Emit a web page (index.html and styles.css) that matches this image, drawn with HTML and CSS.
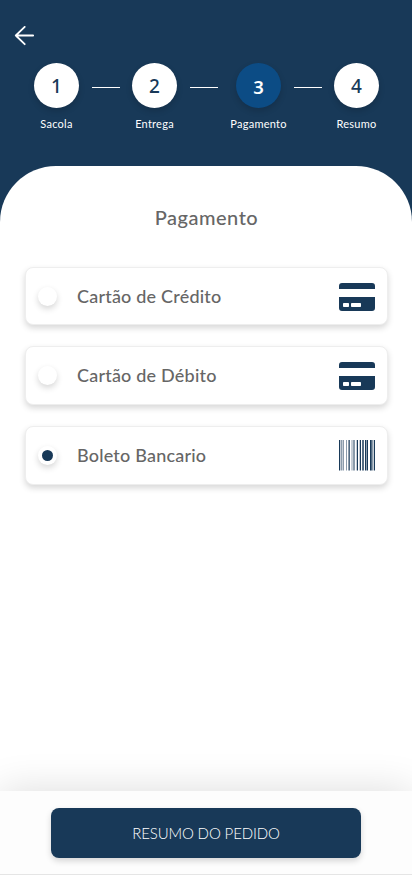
FILE: index.html
```html
<!DOCTYPE html>
<html lang="pt-BR">
<head>
<meta charset="utf-8">
<meta name="viewport" content="width=device-width, initial-scale=1">
<title>Pagamento</title>
<link rel="stylesheet" href="styles.css">
</head>
<body>
<header class="header">
  <a class="back" href="#" aria-label="Voltar">
    <svg width="20" height="20" viewBox="0 0 20 20" fill="none" stroke="#fff" stroke-width="1.8" stroke-linecap="round" stroke-linejoin="round"><path d="M19.2 9.5H1.8M10.7 .9 1.8 9.5l8.9 8.7"/></svg>
  </a>
  <nav class="steps">
    <div class="step"><span class="num">1</span><span class="label">Sacola</span></div>
    <i class="line"></i>
    <div class="step"><span class="num">2</span><span class="label">Entrega</span></div>
    <i class="line"></i>
    <div class="step current"><span class="num">3</span><span class="label">Pagamento</span></div>
    <i class="line"></i>
    <div class="step"><span class="num">4</span><span class="label">Resumo</span></div>
  </nav>
</header>
<main class="sheet">
  <h1 class="title">Pagamento</h1>
  <div class="options">
    <label class="option first"><span class="radio"></span><span class="name">Cartão de Crédito</span>
      <svg class="icon card" width="36" height="28" viewBox="0 0 36 28" fill="#183958"><path d="M0 6V3a3 3 0 0 1 3-3h30a3 3 0 0 1 3 3v3zM0 14h36v11a3 3 0 0 1-3 3H3a3 3 0 0 1-3-3z"/><g fill="#fff"><rect x="4" y="20" width="6" height="4" rx=".7"/><rect x="12" y="20" width="10" height="4" rx=".7"/></g></svg>
    </label>
    <label class="option"><span class="radio"></span><span class="name">Cartão de Débito</span>
      <svg class="icon card" width="36" height="28" viewBox="0 0 36 28" fill="#183958"><path d="M0 6V3a3 3 0 0 1 3-3h30a3 3 0 0 1 3 3v3zM0 14h36v11a3 3 0 0 1-3 3H3a3 3 0 0 1-3-3z"/><g fill="#fff"><rect x="4" y="20" width="6" height="4" rx=".7"/><rect x="12" y="20" width="10" height="4" rx=".7"/></g></svg>
    </label>
    <label class="option"><span class="radio checked"></span><span class="name">Boleto Bancario</span>
      <svg class="icon" width="36" height="31" viewBox="0 0 36 31"><g fill="#183958"><path d="M0 0h1v30.5H0zM18 0h1v30.5h-1zM21 0h1v30.5h-1zM26 0h1v30.5h-1zM28 0h1v30.5h-1zM31 0h1v30.5h-1zM35 0h1v30.5h-1z"/><path opacity=".75" d="M10 0h1v30.5h-1zM23 0h2v30.5h-2zM32 0h1v30.5h-1z"/><path opacity=".5" d="M2 0h1v30.5H2zM4 0h1v30.5H4zM7 0h1v30.5H7zM9 0h1v30.5H9zM14 0h2v30.5h-2zM27 0h1v30.5h-1zM33 0h1v30.5h-1z"/><path opacity=".25" d="M1 0h1v30.5H1zM3 0h1v30.5H3zM12 0h2v30.5h-2zM17 0h1v30.5h-1zM20 0h1v30.5h-1zM34 0h1v30.5h-1z"/></g></svg>
    </label>
  </div>
</main>
<footer class="footer"><button class="submit" type="button">RESUMO DO PEDIDO</button></footer>
</body>
</html>
```
FILE: styles.css
```css
* { box-sizing: border-box; }
body {
  margin: 0;
  height: 875px;
  display: flex;
  flex-direction: column;
  overflow: hidden;
  background: #183958;
  font-family: Lato, "Noto Sans", sans-serif;
}
.header { height: 166px; padding: 26px 33px 0 34px; }
.back { display: block; width: 20px; height: 20px; margin-left: -20px; }
.back svg { display: block; }
.steps { display: flex; margin-top: 17px; }
.step { width: 45px; display: flex; flex-direction: column; align-items: center; }
.step.current { margin-left: 6px; }
.num {
  width: 45px;
  height: 45px;
  border-radius: 50%;
  background: #fff;
  color: #183958;
  font: 500 19px/46px "Noto Sans", sans-serif;
  text-align: center;
  box-shadow: 0 3px 6px rgba(0, 0, 0, .16);
}
.current .num { background: #0c4c85; color: #fff; font-weight: 600; font-size: 18.5px; line-height: 47px; }
.label {
  margin-top: 8px;
  color: #fff;
  font-size: 11px;
  line-height: 15px;
  letter-spacing: .25px;
  white-space: nowrap;
}
.line { flex: none; width: 28px; height: 1px; margin: 24px 12px 0 13px; background: #fff; }
.sheet {
  flex: 1;
  padding: 38px 24px 0 25px;
  background: #fff;
  border-radius: 56px 56px 0 0;
}
.title {
  margin: 0;
  color: #666;
  font-size: 20px;
  font-weight: 500;
  line-height: 26px;
  text-align: center;
  letter-spacing: .5px;
}
.options { display: flex; flex-direction: column; gap: 21px; margin-top: 37px; }
.option {
  height: 59px;
  display: flex;
  align-items: center;
  padding: 0 12px;
  border: 1px solid #eee;
  border-radius: 8px;
  background: #fff;
  box-shadow: 0 3px 6px rgba(0, 0, 0, .16);
}
.option.first { height: 58px; }
.radio {
  width: 19px;
  height: 19px;
  display: grid;
  place-items: center;
  border-radius: 50%;
  background: #fff;
  box-shadow: 0 3px 6px rgba(0, 0, 0, .16);
}
.radio.checked::after { content: ""; width: 11px; height: 11px; border-radius: 50%; background: #183958; }
.name {
  margin: -2px 0 0 20px;
  color: #666;
  font-size: 18px;
  font-weight: 500;
  letter-spacing: .2px;
  white-space: nowrap;
}
.first .name { margin-top: 0; }
.icon { margin-left: auto; }
.icon.card { margin-top: 1px; }
.first .icon.card { margin-top: 2px; }
.footer {
  height: 84px;
  padding-top: 17px;
  text-align: center;
  background: #fdfdfd;
  border-bottom: 1px solid #e5e5e5;
  box-shadow: 0 0 40px rgba(0, 0, 0, .14);
}
.submit {
  width: 310px;
  height: 50px;
  padding: 0;
  border: 0;
  border-radius: 8px;
  background: #183958;
  color: #fff;
  font: 300 15px/49px Lato, "Noto Sans", sans-serif;
  letter-spacing: -.12px;
  box-shadow: 0 3px 6px rgba(0, 0, 0, .16);
}
```
